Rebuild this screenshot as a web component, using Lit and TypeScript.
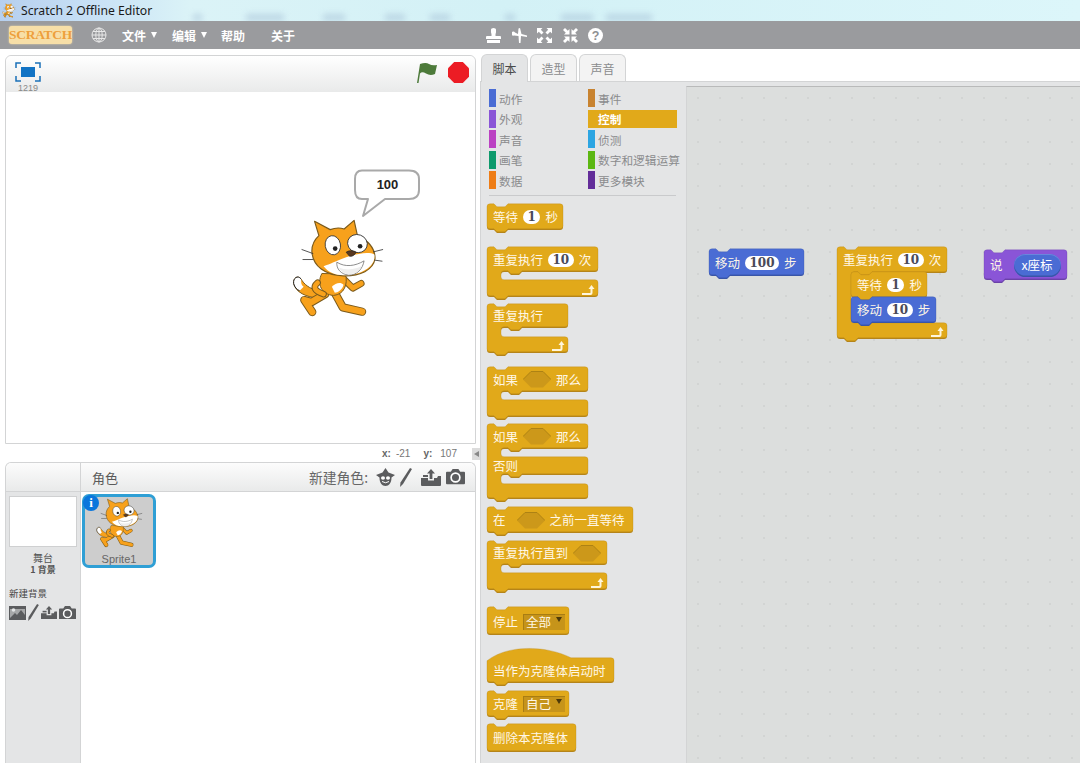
import { LitElement, html, css, svg } from "lit";
import { customElement } from "lit/decorators.js";

const ORANGE = ["#e1a91a", "#b5851a"];
const BLUE = ["#4a6cd4", "#3a55a8"];
const PURPLE = ["#8a55d7", "#6c43a9"];

const TOPN = (x = 0) => `H${x + 7}L${x + 10} 3H${x + 18}L${x + 21} 0`;

function stackPath(w: number, h: number, bump = true, hat = false) {
  const top = hat
    ? `M0 12C20 -4 58 -4 84 9H${w - 3}Q${w} 9 ${w} 12`
    : `M0 3Q0 0 3 0${TOPN()}H${w - 3}Q${w} 0 ${w} 3`;
  const bot = bump ? `H21L18 ${h + 3}H10L7 ${h}H3` : `H3`;
  return `${top}V${h - 3}Q${w} ${h} ${w - 3} ${h}${bot}Q0 ${h} 0 ${h - 3}Z`;
}

/* segs: arm height, gap, arm height, gap, arm height ... */
function cPath(w: number, segs: number[]) {
  let y = 0;
  let d = `M0 3Q0 0 3 0${TOPN()}H${w - 3}Q${w} 0 ${w} 3`;
  for (let i = 0; i < segs.length; i += 2) {
    y += segs[i];
    if (i === segs.length - 1) break;
    d += `V${y - 3}Q${w} ${y} ${w - 3} ${y}H35L32 ${y + 3}H24L21 ${y}H17Q14 ${y} 14 ${y + 3}`;
    const gap = segs[i + 1];
    y += gap;
    d += `V${y - 3}Q14 ${y} 17 ${y}H${w - 3}Q${w} ${y} ${w} ${y + 3}`;
  }
  d += `V${y - 3}Q${w} ${y} ${w - 3} ${y}H21L18 ${y + 3}H10L7 ${y}H3Q0 ${y} 0 ${y - 3}Z`;
  return { d, h: y };
}

type Item =
  | string
  | { n: string }
  | { hex: true }
  | { dd: string }
  | { rep: string }
  | { sp: number };

interface Row {
  h: number;
  items?: Item[];
  inner?: Block[];
}
interface Block {
  kind: "stack" | "cap" | "hat" | "c";
  w: number;
  h?: number;
  mt?: number;
  segs?: number[];
  rows: Row[];
  col?: string[];
  arrow?: boolean;
}

const palette: Block[] = [
  { kind: "stack", w: 76, h: 25, mt: 9, rows: [{ h: 25, items: ["等待", { n: "1" }, "秒"] }] },
  { kind: "c", w: 111, mt: 18, segs: [24, 9, 16], arrow: true, rows: [{ h: 24, items: ["重复执行", { n: "10" }, "次"] }] },
  { kind: "c", w: 81, mt: 8, segs: [23, 10, 15], arrow: true, rows: [{ h: 23, items: ["重复执行"] }] },
  { kind: "c", w: 101, mt: 15, segs: [24, 9, 16], rows: [{ h: 24, items: ["如果", { hex: true }, "那么"] }] },
  { kind: "c", w: 101, mt: 8, segs: [24, 9, 17, 10, 14], rows: [{ h: 24, items: ["如果", { hex: true }, "那么"] }, { h: 9 }, { h: 17, items: ["否则"] }] },
  { kind: "stack", w: 146, h: 25, mt: 9, rows: [{ h: 25, items: ["在", { sp: 1 }, { hex: true }, "之前一直等待"] }] },
  { kind: "c", w: 120, mt: 9, segs: [23, 9, 16], arrow: true, rows: [{ h: 23, items: ["重复执行直到", { hex: true }] }] },
  { kind: "cap", w: 82, h: 27, mt: 18, rows: [{ h: 29, items: ["停止", { dd: "全部" }] }] },
  { kind: "hat", w: 127, h: 33, mt: 15, rows: [{ h: 10 }, { h: 23, items: ["当作为克隆体启动时"] }] },
  { kind: "stack", w: 82, h: 25, mt: 9, rows: [{ h: 25, items: ["克隆", { dd: "自己" }] }] },
  { kind: "cap", w: 89, h: 27, mt: 8, rows: [{ h: 27, items: ["删除本克隆体"] }] },
];

const scripts: { x: number; y: number; b: Block }[] = [
  { x: 22, y: 163, b: { kind: "stack", w: 95, h: 26, col: BLUE, rows: [{ h: 26, items: ["移动", { n: "100" }, "步"] }] } },
  {
    x: 150, y: 161,
    b: {
      kind: "c", w: 110, segs: [25, 51, 15], arrow: true,
      rows: [
        { h: 25, items: ["重复执行", { n: "10" }, "次"] },
        {
          h: 51,
          inner: [
            { kind: "stack", w: 76, h: 25, rows: [{ h: 25, items: ["等待", { n: "1" }, "秒"] }] },
            { kind: "stack", w: 85, h: 25, col: BLUE, rows: [{ h: 25, items: ["移动", { n: "10" }, "步"] }] },
          ],
        },
      ],
    },
  },
  { x: 297, y: 164, b: { kind: "stack", w: 83, h: 29, col: PURPLE, rows: [{ h: 29, items: ["说", { sp: 1 }, { rep: "x座标" }] }] } },
];

const cats = [
  [["动作", "#4a6cd4"], ["事件", "#c88330"]],
  [["外观", "#8a55d7"], ["控制", "#e1a91a"]],
  [["声音", "#bb42c3"], ["侦测", "#2ca5e2"]],
  [["画笔", "#0e9a6c"], ["数字和逻辑运算", "#5cb712"]],
  [["数据", "#ee7d16"], ["更多模块", "#632d99"]],
];

const smudges = [
  [193, 9], [246, 38], [323, 22], [385, 20], [430, 20], [505, 10], [561, 32], [606, 46],
];

function cat(w: number, h: number) {
  const o = "#f7a11c";
  const l = "#7a5a1c";
  return html`<svg class="cat" width=${w} height=${h} viewBox="30 170 290 310">
    <path d="M112 392C88 385 72 374 62 356C52 344 38 354 40 370C45 396 78 412 116 414Z" fill=${o} stroke=${l} stroke-width="3"/>
    <path d="M62 356C52 344 38 354 40 370C43 382 50 389 58 392L70 380C60 372 64 364 62 356Z" fill="#fff"/>
    <path d="M62 356C52 344 38 354 40 370C43 382 50 389 58 392" fill="none" stroke="#222" stroke-width="3"/>
    <g fill="none" stroke-linecap="round" stroke-linejoin="round">
      <path d="M135 402L94 426L72 420L96 456" stroke=${l} stroke-width="25"/>
      <path d="M135 402L94 426L72 420L96 456" stroke=${o} stroke-width="19"/>
      <path d="M155 382L188 442L246 455" stroke=${l} stroke-width="25"/>
      <path d="M155 382L188 442L246 455" stroke=${o} stroke-width="19"/>
      <path d="M192 358L218 384L243 370" stroke=${l} stroke-width="21"/>
      <path d="M192 358L218 384L243 370" stroke=${o} stroke-width="15"/>
    </g>
    <path d="M125 340C108 372 125 404 160 406C192 404 204 372 196 342Z" fill=${o} stroke=${l} stroke-width="3"/>
    <path d="M155 380C166 368 182 364 190 374C188 388 172 398 164 398Z" fill="#fff"/>
    <g fill="none" stroke-linecap="round" stroke-linejoin="round">
      <path d="M112 368C98 380 100 392 130 402" stroke=${l} stroke-width="20"/>
      <path d="M112 368C98 380 100 392 130 402" stroke=${o} stroke-width="14"/>
    </g>
    <path d="M103 183L150 208C165 202 180 202 192 206L222 180L232 226C262 240 285 262 285 295C280 330 240 348 190 347C135 346 98 318 95 275C94 255 103 238 116 226Z" fill=${o} stroke=${l} stroke-width="3.500" stroke-linejoin="round"/>
    <path d="M130 318C150 312 168 302 196 292C225 282 265 272 283 283C288 315 250 345 190 345C165 345 144 336 130 318Z" fill="#fff"/>
    <ellipse cx="158" cy="255" rx="23" ry="29" fill="#fff" stroke="#333" stroke-width="2.500" transform="rotate(-10 158 255)"/>
    <ellipse cx="232" cy="250" rx="30" ry="27" fill="#fff" stroke="#333" stroke-width="2.500" transform="rotate(20 232 250)"/>
    <circle cx="165" cy="265" r="7" fill="#222"/>
    <circle cx="240" cy="258" r="7" fill="#222"/>
    <path d="M198 276C205 270 222 270 228 276C224 286 214 290 208 288Z" fill="#5a3a22" stroke="#222" stroke-width="2"/>
    <path d="M170 306C195 322 225 318 252 302C248 326 230 346 205 345C182 342 168 326 170 306Z" fill="#fff" stroke="#777" stroke-width="2.500" stroke-linejoin="round"/>
    <path d="M176 322C198 332 230 328 246 316C238 334 225 343 205 342C192 342 182 334 176 322Z" fill="#eee"/>
    <path d="M65 268L98 280M68 298L97 298M280 275L308 268M285 300L306 303" stroke="#333" stroke-width="2.500" fill="none" stroke-linecap="round"/>
  </svg>`;
}

const camera = (w: number) => html`<svg width=${w} viewBox="0 0 20 16" height=${(w * 16) / 20}><path fill="#5b5c5e" d="M1 3h4l2-3h6l2 3h4q1 0 1 1v11q0 1-1 1H1q-1 0-1-1V4q0-1 1-1z"/><circle cx="10" cy="9" r="4.600" fill="none" stroke="#fff" stroke-width="1.800"/></svg>`;
const pencil = (w: number, h: number) => html`<svg width=${w} height=${h} viewBox="0 0 12 19"><path fill="#5b5c5e" d="M10 0l2 1L3 16 0 19l.5-4.500z"/></svg>`;
const upload = (w: number) => html`<svg width=${w} height=${(w * 17) / 20} viewBox="0 0 20 17"><path fill="#5b5c5e" d="M10 0l4 4.500h-2.600V10H8.600V4.500H6zM0 9h7v2.500h6V9h3l1-2h3v9q0 1-1 1H1q-1 0-1-1z"/><path fill="#5b5c5e" d="M2 6h5v2H2z"/></svg>`;
const imageIcon = html`<svg width="17" height="14" viewBox="0 0 17 14"><rect width="17" height="14" fill="#5b5c5e"/><circle cx="4.500" cy="4" r="1.800" fill="#e4e5e6"/><path fill="#e4e5e6" d="M1 12l5-5 2 2 4-5 4 5v-6H1z" opacity=".55"/></svg>`;

@customElement("app-block")
class AppBlock extends LitElement {
  static properties = { b: { attribute: false } };
  b!: Block;
  static styles = css`
    :host { display: block; position: relative; font: 12.500px "Noto Sans CJK SC", sans-serif; color: #fff7e6; }
    svg.shape { position: absolute; left: 0; top: 0; overflow: visible; }
    .body { position: relative; display: flex; flex-direction: column; }
    .row { display: flex; align-items: center; gap: 5px; padding: 0 0 1px 6px; box-sizing: border-box; white-space: nowrap; line-height: 14px; }
    .inner { display: block; margin-left: 14px; padding: 0; }
    .n { display: inline-block; height: 14px; line-height: 14px; padding: 0 4.500px; border-radius: 8px; background: #fff;
      font: bold 12px "DejaVu Serif", serif; color: #4a4a58; }
    .hex { display: block; }
    .dd { display: inline-flex; align-items: center; justify-content: space-between; width: 42px; height: 16px; padding: 0 3px; box-sizing: border-box; background: #c6941a; box-shadow: inset 1px 1px 0 #a87d14; }
    .dd i { width: 0; height: 0; border: 3.500px solid transparent; border-top: 5px solid #4d3a0a; border-bottom: 0; margin-bottom: 6px; }
    .rep { display: inline-flex; align-items: center; justify-content: center; width: 47px; height: 23px; border-radius: 12px; background: #4a6cd4; box-shadow: inset 0 -1.500px 0 #3a55a8, inset 0 1px 0 #6a86dc; font-size: 12.500px; color: #fff; }
    .sp { display: block; }
  `;
  item(it: Item) {
    if (typeof it === "string") return html`<span>${it}</span>`;
    if ("n" in it) return html`<span class="n">${it.n}</span>`;
    if ("hex" in it)
      return html`<svg class="hex" width="28" height="17" viewBox="0 0 28 17"><path d="M8 0.500H20L28 8.500L20 16.500H8L0 8.500Z" fill="#cc981a"/><path d="M0 8.500L8 0.500H20L28 8.500" fill="none" stroke="#ad8214" stroke-width="1"/></svg>`;
    if ("dd" in it) return html`<span class="dd">${it.dd}<i></i></span>`;
    if ("rep" in it) return html`<span class="rep">${it.rep}</span>`;
    return html`<span class="sp" style="width:${it.sp}px"></span>`;
  }
  render() {
    const b = this.b;
    const [c, dark] = b.col ?? ORANGE;
    let d = "";
    let h = b.h ?? 0;
    if (b.kind === "c") {
      const r = cPath(b.w, b.segs!);
      d = r.d;
      h = r.h;
    } else {
      d = stackPath(b.w, h, b.kind !== "cap", b.kind === "hat");
    }
    return html`<div class="wrap" style="width:${b.w}px;height:${h}px">
      <svg class="shape" width=${b.w} height=${h}>
        <path d=${d} fill=${dark}></path>
        <path d=${d} fill=${c} stroke=${dark} stroke-opacity=".45" stroke-width=".7" transform="translate(0 -1.200)"></path>
        ${b.arrow
          ? svg`<path transform="translate(${b.w - 16} ${h - 13})" fill="#fff6dc" d="M0 9H8Q8.500 9 8.500 8.500V5H6.500L9.500 1L12.500 5H10.500V9Q10.500 11 8.500 11H0Z"></path>`
          : ""}
      </svg>
      <div class="body">
        ${b.rows.map((r) =>
          r.inner
            ? html`<div class="inner" style="height:${r.h}px">${r.inner.map((x) => html`<app-block .b=${x}></app-block>`)}</div>`
            : html`<div class="row" style="height:${r.h}px">${(r.items ?? []).map((i) => this.item(i))}</div>`
        )}
      </div>
    </div>`;
  }
}

@customElement("app-root")
export class AppRoot extends LitElement {
  static styles = css`
    :host { display: block; width: 1080px; height: 763px; overflow: hidden; background: #fff; font-family: "Noto Sans CJK SC", sans-serif; color: #555; }
    .title { position: relative; height: 21px; display: flex; align-items: center; gap: 5px; padding-left: 2px; overflow: hidden;
      background: linear-gradient(90deg, #b6cfee 0, #c9e2f6 100px, #dbf3f7 190px, #d3f1f6 500px, #dcf6fa 1080px); }
    .title .t { font: 12.200px "Noto Sans", sans-serif; color: #1a1a1a; white-space: nowrap; position: relative; }
    .smudges { position: absolute; inset: 0; }
    .smudges b { position: absolute; top: 14px; height: 7px; background: #a6c0d6; filter: blur(3px); opacity: .55; }
    .menu { height: 28px; background: #9a9b9e; display: flex; align-items: center; color: #fff; font-size: 12px; font-weight: 700; position: relative; }
    .logo { margin-left: 9px; width: 63px; height: 18px; background: #f7dfa8; border-radius: 3px; color: #ee9f3c; font: bold 13.500px "Liberation Serif", serif; letter-spacing: -.3px; line-height: 18px; text-align: center; box-shadow: 0 0 2px #f7dfa8; white-space: nowrap; }
    .globe { margin-left: 19px; }
    .mi { display: flex; align-items: center; gap: 5px; white-space: nowrap; }
    .mi i { width: 0; height: 0; border: 3.500px solid transparent; border-top: 6px solid #fff; border-bottom: 0; }
    .m1 { margin-left: 15px; }
    .m2 { margin-left: 15px; }
    .m3 { margin-left: 14px; }
    .m4 { margin-left: 26px; }
    .tools { margin-left: 191px; display: flex; gap: 10.500px; align-items: center; }
    .main { display: flex; height: 714px; }
    .left { width: 480px; flex: none; padding: 6px 4px 0 5px; box-sizing: border-box; display: flex; flex-direction: column; }
    .stage { height: 389px; box-sizing: border-box; border: 1px solid #d3d4d5; border-radius: 6px 6px 0 0; display: flex; flex-direction: column; }
    .sh { height: 36px; flex: none; background: linear-gradient(#fff, #e9eaea); border-radius: 6px 6px 0 0; display: flex; align-items: flex-start; justify-content: space-between; padding: 6px 6px 0 9px; box-sizing: border-box; }
    .zoom { display: flex; flex-direction: column; align-items: center; font: 9px "Liberation Sans", sans-serif; color: #888; width: 26px; line-height: 9px; gap: 2px; }
    .flagstop { display: flex; gap: 10px; }
    .canvas { position: relative; flex: 1; background: #fff; }
    .canvas .cat { position: absolute; left: 284px; top: 125px; }
    .bubble { position: absolute; left: 347px; top: 76px; overflow: visible; }
    .bubbletxt { position: absolute; left: 349px; top: 85px; width: 65px; text-align: center; font: bold 13px/16px "Liberation Sans", sans-serif; color: #222; }
    .coords { height: 18px; flex: none; display: flex; align-items: center; justify-content: flex-end; font: 10px "Liberation Sans", sans-serif; color: #777; position: relative; padding-right: 19px; }
    .coords b { color: #666; margin-right: 5px; }
    .coords .y { margin-left: 13px; }
    .coords .y b { margin-right: 8px; }
    .arrowbtn { position: absolute; right: -4px; top: 4px; width: 8px; height: 12px; background: #dcdcdc; display: flex; align-items: center; justify-content: center; }
    .arrowbtn i { width: 0; height: 0; border: 3.500px solid transparent; border-right: 5px solid #888; border-left: 0; }
    .sprites { flex: 1; border: 1px solid #d3d4d5; border-bottom: 0; border-radius: 6px 6px 0 0; display: flex; flex-direction: column; min-height: 0; }
    .sph { height: 29px; flex: none; display: flex; background: linear-gradient(#fcfcfc, #e9eaea); border-bottom: 1px solid #d3d4d5; border-radius: 6px 6px 0 0; box-sizing: border-box; align-items: center; }
    .sph .corner { width: 75px; flex: none; align-self: stretch; border-right: 1px solid #d3d4d5; box-sizing: border-box; }
    .sph .ttl { margin-left: 11px; font-size: 13px; color: #5a5a5a; }
    .sph .new { margin-left: auto; display: flex; align-items: center; font-size: 13.800px; color: #666; margin-right: 10px; }
    .sph .icons { display: flex; align-items: center; gap: 5px; margin-left: 8px; }
    .sph .icons .gapl { display: flex; margin-left: 4px; }
    .spb { flex: 1; display: flex; min-height: 0; }
    .side { width: 75px; flex: none; background: #e4e5e6; border-right: 1px solid #d3d4d5; box-sizing: border-box; display: flex; flex-direction: column; padding: 4px 0 0 3px; }
    .thumb { width: 68px; height: 51px; background: #fff; border: 1px solid #cfd0d1; box-sizing: border-box; }
    .side .c { width: 68px; text-align: center; font-size: 10px; color: #555; line-height: 12px; }
    .side .c1 { margin-top: 5px; }
    .side .c2 { font-size: 9px; font-weight: 700; }
    .side .nb { font-size: 9.500px; color: #444; margin-top: 11px; line-height: 12px; }
    .side .ic { display: flex; align-items: center; gap: 2px; margin-top: 5px; }
    .spa { flex: 1; padding: 2px 0 0 1px; }
    .card { position: relative; width: 74px; height: 74px; box-sizing: border-box; border: 3px solid #2f9fd5; border-radius: 7px; background: #cdcdcd; display: flex; flex-direction: column; align-items: center; }
    .card span { font: 11px/12px "Liberation Sans", sans-serif; color: #666; margin-top: 4px; }
    .info { position: absolute; left: -2px; top: -2px; width: 16px; height: 16px; border-radius: 50%; background: #0a76dc; color: #fff; font: bold 13px/16px "Liberation Serif", serif; text-align: center; }
    .right { flex: 1; display: flex; flex-direction: column; min-width: 0; }
    .tabs { height: 27px; margin-top: 5px; flex: none; display: flex; gap: 2px; padding-left: 1px; position: relative; z-index: 1; }
    .tab { width: 47px; height: 27px; box-sizing: border-box; border: 1px solid #d3d4d5; border-bottom: 0; border-radius: 6px 6px 0 0; background: #f3f3f3; font-size: 12px; color: #8a8b8d; display: flex; align-items: center; justify-content: center; }
    .tab.on { background: #e4e5e6; color: #4a4a4a; height: 28px; }
    .panel { flex: 1; display: flex; background: #e4e5e6; min-height: 0; border-top: 1px solid #d3d4d5; box-sizing: border-box; }
    .pal { width: 206px; flex: none; box-sizing: border-box; padding: 7px 0 0 6px; border-left: 1px solid #d3d4d5; }
    .cats { display: grid; grid-template-columns: 99px 99px; row-gap: 2.500px; margin-left: 2px; }
    .cat-i { height: 18px; display: flex; align-items: center; gap: 3.500px; font-size: 11.700px; color: #8a8b8d; white-space: nowrap; width: 89px; }
    .cat-i i { width: 6.500px; height: 18px; flex: none; }
    .cat-i.on { color: #fff; font-weight: 700; }
    .sep { height: 1px; width: 187px; margin: 6px 0 0 2px; background: #c9cacc; }
    .script { flex: 1; margin-top: 4px; position: relative; overflow: hidden; border-top: 1px solid #b9baba; border-left: 1px solid #d3d4d5; background-color: #dcdedd;
      background-image: radial-gradient(circle, #d2d4d3 1px, transparent 1.500px); background-size: 22px 22px; }
    .script app-block { position: absolute; }
  `;

  render() {
    return html`
      <div class="title">
        <div class="smudges">${smudges.map(([x, w]) => html`<b style="left:${x}px;width:${w}px"></b>`)}</div>
        ${cat(14, 15)}
        <span class="t">Scratch 2 Offline Editor</span>
      </div>
      <div class="menu">
        <div class="logo">SCRATCH</div>
        <svg class="globe" width="16" height="16" viewBox="0 0 16 16" fill="none" stroke="#e8e8e8" stroke-width="1"><circle cx="8" cy="8" r="7"/><ellipse cx="8" cy="8" rx="3.200" ry="7"/><path d="M1 8h14M2 4.500h12M2 11.500h12M8 1v14"/></svg>
        <div class="mi m1">文件<i></i></div>
        <div class="mi m2">编辑<i></i></div>
        <div class="mi m3">帮助</div>
        <div class="mi m4">关于</div>
        <div class="tools">
          <svg width="15" height="15" viewBox="0 0 15 15" fill="#fff"><path d="M5 1.500Q5 0 7.500 0T10 1.500V4Q10 5 9.500 6V8H14Q15 8 15 9V11H0V9Q0 8 1 8H5.500V6Q5 5 5 4ZM1 12H14V15H1Z"/></svg>
          <svg width="15" height="15" viewBox="0 0 15 15" fill="#fff"><path d="M8 0L9.500 6L15 7.500V9L9 8L8.500 15H7L6.500 8L2 7.500A2 2 0 1 1 3 4.500L6 6L6.500 .5Z"/></svg>
          <svg width="15" height="15" viewBox="0 0 15 15" fill="#fff"><path d="M0 0H5.500L3.800 1.800L6.500 4.500L4.500 6.500L1.800 3.800L0 5.500ZM15 0V5.500L13.200 3.800L10.500 6.500L8.500 4.500L11.200 1.800L9.500 0ZM0 15V9.500L1.800 11.200L4.500 8.500L6.500 10.500L3.800 13.200L5.500 15ZM15 15H9.500L11.200 13.200L8.500 10.500L10.500 8.500L13.200 11.200L15 9.500Z"/></svg>
          <svg width="15" height="15" viewBox="0 0 15 15" fill="#fff"><path d="M6.500 6.500H1L2.800 4.800L0 2L2 0L4.800 2.800L6.500 1ZM8.500 6.500V1L10.200 2.800L13 0L15 2L12.200 4.800L14 6.500ZM6.500 8.500V14L4.800 12.200L2 15L0 13L2.800 10.200L1 8.500ZM8.500 8.500H14L12.200 10.200L15 13L13 15L10.200 12.200L8.500 14Z"/></svg>
          <svg width="15" height="15" viewBox="0 0 15 15"><circle cx="7.500" cy="7.500" r="7.500" fill="#fff"/><text x="7.500" y="12" text-anchor="middle" font-family="Liberation Sans" font-weight="700" font-size="12.500" fill="#8f9093">?</text></svg>
        </div>
      </div>
      <div class="main">
        <div class="left">
          <div class="stage">
            <div class="sh">
              <div class="zoom">
                <svg width="26" height="20" viewBox="0 0 26 20" fill="none"><path d="M1 6V1H6M20 1H25V6M1 14V19H6M20 19H25V14" stroke="#1a70b8" stroke-width="1.500"/><rect x="6" y="5" width="14" height="10" fill="#1273c4"/></svg>
                1219
              </div>
              <div class="flagstop">
                <svg width="21" height="22" viewBox="0 0 21 22"><path fill="#4d7a3a" d="M3 2Q9 0 12 2T20 3L18 12Q13 14 9 11.500T3 11.500L1.500 21H0Z"/></svg>
                <svg width="21" height="21" viewBox="0 0 21 21"><path fill="#ec1c24" d="M6.200 0H14.800L21 6.200V14.800L14.800 21H6.200L0 14.800V6.200Z"/></svg>
              </div>
            </div>
            <div class="canvas">
              ${cat(97, 103)}
              <svg class="bubble" width="70" height="50" viewBox="0 0 70 50"><path d="M9 2.500H56Q66 2.500 66 11V22Q66 31 56 31H32L10 48L15 31H9Q2 31 2 22V11Q2 2.500 9 2.500Z" fill="#fff" stroke="#a9a9a9" stroke-width="2" stroke-linejoin="round"/></svg>
              <div class="bubbletxt">100</div>
            </div>
          </div>
          <div class="coords">
            <span><b>x:</b>-21</span>
            <span class="y"><b>y:</b>107</span>
            <div class="arrowbtn"><i></i></div>
          </div>
          <div class="sprites">
            <div class="sph">
              <div class="corner"></div>
              <div class="ttl">角色</div>
              <div class="new">
                新建角色:
                <div class="icons">
                  <svg width="19" height="19" viewBox="0 0 19 19" fill="#5b5c5e"><path d="M9.500 0L12.500 4.500L19 7L15.500 9.500C15.500 15 13 18 9.500 18S3.500 15 3.500 9.500L0 7L6.500 4.500Z"/><ellipse cx="7" cy="10" rx="2" ry="1.800" fill="#fff"/><ellipse cx="12" cy="10" rx="2" ry="1.800" fill="#fff"/><path d="M6 13.500Q9.500 16 13 13.500" stroke="#fff" fill="none"/></svg>
                  ${pencil(12, 19)}
                  <span class="gapl">${upload(20)}</span>
                  ${camera(19)}
                </div>
              </div>
            </div>
            <div class="spb">
              <div class="side">
                <div class="thumb"></div>
                <div class="c c1">舞台</div>
                <div class="c c2">1 背景</div>
                <div class="nb">新建背景</div>
                <div class="ic">
                  ${imageIcon}
                  ${pencil(11, 17)}
                  ${upload(16)}
                  ${camera(17)}
                </div>
              </div>
              <div class="spa">
                <div class="card">
                  <div class="info">i</div>
                  ${cat(49, 52)}
                  <span>Sprite1</span>
                </div>
              </div>
            </div>
          </div>
        </div>
        <div class="right">
          <div class="tabs">
            <div class="tab on">脚本</div>
            <div class="tab">造型</div>
            <div class="tab">声音</div>
          </div>
          <div class="panel">
            <div class="pal">
              <div class="cats">
                ${cats.flat().map(
                  ([n, c]) => html`<div class="cat-i ${n === "控制" ? "on" : ""}" style=${n === "控制" ? `background:${c}` : ""}>
                    <i style="background:${c}"></i><span>${n}</span>
                  </div>`
                )}
              </div>
              <div class="sep"></div>
              ${palette.map((b) => html`<app-block style="margin-top:${b.mt}px" .b=${b}></app-block>`)}
            </div>
            <div class="script">
              ${scripts.map((s) => html`<app-block style="left:${s.x}px;top:${s.y}px" .b=${s.b}></app-block>`)}
            </div>
          </div>
        </div>
      </div>
    `;
  }
}
